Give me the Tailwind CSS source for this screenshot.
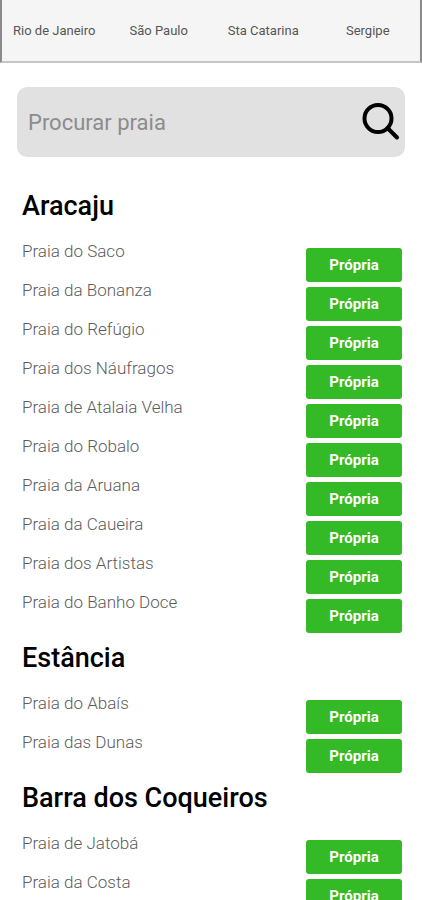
<!DOCTYPE html>
<html lang="pt-BR">
<head>
<meta charset="utf-8">
<meta name="viewport" content="width=device-width, initial-scale=1">
<title>Praias</title>
<script src="https://cdn.jsdelivr.net/npm/@tailwindcss/browser@4"></script>
</head>
<body class="bg-white font-[Roboto,sans-serif] text-black">
<header class="border-x-2 border-b-2 border-x-[#8a8a8a] border-b-[#c6c6c6] bg-[#f5f5f5]">
  <nav class="grid grid-cols-4 pt-[22px] pb-[21px] text-center text-[13px] leading-[18px] text-[#555]">
    <a href="#rio">Rio de Janeiro</a>
    <a href="#sp">São Paulo</a>
    <a href="#sc">Sta Catarina</a>
    <a href="#se">Sergipe</a>
  </nav>
</header>
<main>
  <form role="search" class="mx-[17px] mt-6 flex h-[70px] items-center rounded-[10px] bg-[#e1e1e1] pr-1 pl-[11px]">
    <input type="search" aria-label="Procurar praia" placeholder="Procurar praia" class="h-full min-w-0 flex-1 bg-transparent text-[22px] font-normal text-[#333] outline-none placeholder:text-[#8c8c8c]">
    <button type="submit" aria-label="Buscar" class="shrink-0">
      <svg class="size-10" viewBox="0 0 40 40" fill="none" stroke="#000" stroke-width="4" stroke-linecap="round" aria-hidden="true"><circle cx="17" cy="16.500" r="13.500"/><path d="M26.500 26L36 35.500"/></svg>
    </button>
  </form>
  <div id="praias" class="mt-6 pr-5 pl-[22px]"></div>
</main>
<script>
const cities = [
  ["Aracaju", ["Praia do Saco", "Praia da Bonanza", "Praia do Refúgio", "Praia dos Náufragos", "Praia de Atalaia Velha", "Praia do Robalo", "Praia da Aruana", "Praia da Caueira", "Praia dos Artistas", "Praia do Banho Doce"]],
  ["Estância", ["Praia do Abaís", "Praia das Dunas"]],
  ["Barra dos Coqueiros", ["Praia de Jatobá", "Praia da Costa"]]
];
document.getElementById("praias").innerHTML = cities.map(([city, beaches]) => `
  <section>
    <h2 class="pt-[11px] pb-[23px] text-[27px] leading-7 font-medium">${city}</h2>
    <ul>${beaches.map(b => `
      <li class="flex h-[39px] items-start justify-between">
        <span class="text-[17px] leading-4 font-light text-[#5c5c5c]">${b}</span>
        <button type="button" aria-label="Própria: ${b}" class="h-[34px] w-24 self-end rounded-[3px] bg-[#34b927] text-[15px] font-bold text-white">Própria</button>
      </li>`).join("")}
    </ul>
  </section>`).join("");
</script>
</body>
</html>
